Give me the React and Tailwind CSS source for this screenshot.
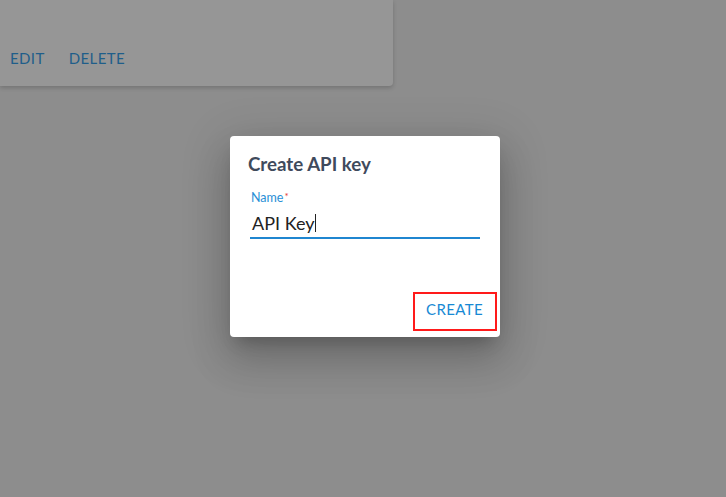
import React from "react";

export default function App() {
  return (
    <div className="relative w-[726px] h-[497px] overflow-hidden bg-[#8d8d8d] font-['Lato','Liberation_Sans',sans-serif]">
      <div className="w-[393px] h-[86px] bg-[#969696] rounded-br shadow-[0_2px_4px_rgba(0,0,0,0.18)] pt-[49px] pl-[10px]">
        <div className="flex gap-[24px] text-[15px] leading-[18px] tracking-[0.4px] text-[#1f5e8a]">
          <span>EDIT</span>
          <span>DELETE</span>
        </div>
      </div>

      <div className="absolute inset-0 flex justify-center items-start">
        <div className="mt-[136px] ml-[4px] w-[270px] h-[201px] bg-white rounded-[4px] shadow-[0_11px_15px_-7px_rgba(0,0,0,0.2),0_24px_38px_3px_rgba(0,0,0,0.14),0_9px_46px_8px_rgba(0,0,0,0.12)] flex flex-col">
          <div className="pt-[16px] pl-[18px] text-[18.7px] leading-[24px] font-bold text-[#3f4a5c]">
            Create API key
          </div>
          <div className="mx-[20px] mt-[14px]">
            <div className="pl-[1px] text-[12.5px] leading-[16px] text-[#2a8fd6]">
              Name<span className="text-[#e53935] text-[10px] align-top relative -top-[2px] ml-[1px]">*</span>
            </div>
            <div className="mt-[5px] pb-[2px] border-b-2 border-[#1f86d0] pl-[2px] text-[18px] leading-[24px] text-[#222222] flex items-center">
              <span>API Key</span>
              <span className="inline-block w-[1px] h-[18px] bg-[#222222] ml-[1px] mb-[1px]"></span>
            </div>
          </div>
          <div className="flex justify-end mt-[53px] mr-[3px]">
            <div className="w-[84px] h-[39px] border-2 border-[#ff1a1a] pt-[6px] pl-[11px] text-[15px] leading-[18px] tracking-[0.4px] text-[#1789d4]">
              CREATE
            </div>
          </div>
        </div>
      </div>
    </div>
  );
}
